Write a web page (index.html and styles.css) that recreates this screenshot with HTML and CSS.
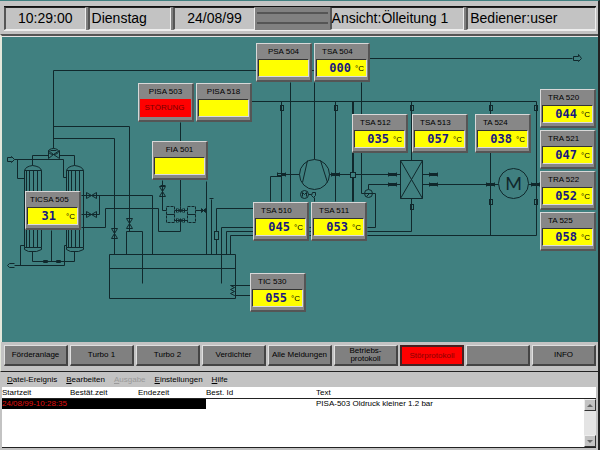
FILE: index.html
```html
<!DOCTYPE html>
<html lang="de">
  <head>
    <meta charset="UTF-8" />
    <meta name="viewport" content="width=device-width, initial-scale=1.0" />
    <title>Ölleitung 1</title>
    <link rel="stylesheet" href="styles.css">
  </head>
  <body>
    <header>
      <div class="field time">10:29:00</div>
      <div class="field day">Dienstag</div>
      <div class="field date">24/08/99</div>
      <div class="grip"></div>
      <div class="field view">Ansicht:Ölleitung 1</div>
      <div class="field user">Bediener:user</div>
    </header>

    <main>
      <div class="plant">
        <svg class="pipes" viewBox="2 37 595 305" width="595" height="305" aria-hidden="true">
          <defs>
            <path id="valve-h" d="M-5,-3 V3 L5,-3 V3 Z" />
            <path id="valve-v" d="M-3,-5 H3 L-3,5 H3 Z" />
            <g id="flange">
              <path d="M-4,-2 V2 M4,-2 V2 M-4,-1 H4 M-4,1 H4" />
            </g>
            <rect id="stub" x="-1" y="-2" width="3" height="5" />
          </defs>
          <g transform="translate(.5 .5)">
            <!-- main lines -->
            <path d="M256,70 H53 V148 M53,126 H129 V231 M53,138 H114 V254" />
            <path d="M126,254 V231 H142 V283" />
            <path d="M311,70 H314 M369,58 H572" />
            <path d="M573,56 H578 V54 L581,58 L578,61 V60 H573 Z" />
            <path d="M251,101 H536 M536,101 V235 M490,101 V235 M367,235 H536" />
            <path d="M281,101 V201 M290,82 V201 M314,82 V159 M335,101 V201" />
            <path d="M352,101 V201 M353,101 V201 M361,82 V193 H364" />
            <path d="M411,101 V160 M411,198 V231 H367" />

            <!-- absorber columns -->
            <ellipse cx="53" cy="151" rx="5" ry="3" />
            <path d="M48,158 V150 L53,154 L59,150 V158 L53,154 Z M50,150 H56" />
            <path d="M48,155 H32 V165 M59,155 H74 V165" />
            <path d="M14,159 H63 V177 H66 M17,159 V178 H24" />
            <path d="M7,157 H11 V156 L14,159 L11,162 V161 H7 Z" />
            <path d="M24,170 Q25,166 32,165 Q40,166 41,170 Z M66,170 Q67,166 74,165 Q82,166 83,170 Z" />
            <path d="M24,170 V247 M26,170 V247 M29,170 V247 M33,170 V247 M37,170 V247 M41,170 V247" />
            <path d="M66,170 V247 M68,170 V247 M71,170 V247 M75,170 V247 M79,170 V247 M83,170 V247" />
            <path d="M24,247 H41 V249 L36,251 H28 L24,249 Z M66,247 H83 V249 L78,251 H70 L66,249 Z" />
            <path d="M32,251 V261 H74 V251 M51,230 V261" />
            <path d="M43,260 H47 V262 H43 Z M56,260 H60 V262 H56 Z" />
            <path d="M14,265 H64 V245 H66 M20,265 V245 H24 M14,263 H9 L7,265 L9,267 H14" />

            <!-- lines to the oil tank -->
            <path d="M81,195 H152 V254 M81,214 H99 V195" />
            <path d="M81,227 H105 V208 H158 V231 H180 V222" />
            <use href="#valve-h" x="91" y="195" />
            <use href="#valve-h" x="91" y="214" />
            <use href="#valve-v" x="129" y="223" />
            <use href="#valve-v" x="114" y="233" />

            <!-- oil pumps -->
            <path d="M180,122 V206 M162,180 V210 H166 M160,185 H165" />
            <use href="#valve-v" x="162" y="191" />
            <path class="dash" d="M166,206 H174 V222 H166 Z M187,206 H195 V222 H187 Z" />
            <path d="M174,210 H187 M174,220 H187 M166,214 H174 M187,214 H195 M180,206 V212 M180,218 V224" />
            <path d="M177,208 L183,212 M183,208 L177,212 M177,218 L183,222 M183,218 L177,222" />
            <path d="M176,208 V212 M184,208 V212 M176,218 V222 M184,218 V222" />
            <path d="M195,210 H205 M201,208 L205,212 V208 L201,212 Z" />

            <!-- tank -->
            <path d="M109,254 H235 V298 H109 Z M109,268 H235" />
            <path d="M206,181 V254 M211,199 V254 M209,198 H213" />
            <path d="M216,254 V208 H253 M221,283 V227 H253 M226,254 V231 H253 M230,254 V235 H253" />
            <rect class="fill" x="214" y="231" width="4" height="8" />
            <path d="M250,285 H230 L234,287 L230,289 L234,291 L230,293 L234,295 H250" />
            <path d="M309,227 H311 M309,231 H311 M309,235 H311" />

            <!-- compressor -->
            <circle class="fill" cx="314" cy="174" r="15" />
            <path d="M307,160 L302,182 M320,160 L327,182" />
            <path d="M299,174 H281 M329,174 H400 M270,201 V176 H281" />
            <use href="#flange" x="281" y="174" />
            <use href="#flange" x="335" y="174" />
            <rect class="fill" x="350" y="172" width="5" height="5" />
            <circle cx="304" cy="194" r="4" />
            <path d="M302,196 V192 L304,194 L306,192 V196 M308,194 H311 M312,192 H315 V195 L313,197 L311,195 Z M314,197 V201" />

            <!-- oil return -->
            <circle cx="368" cy="193" r="4" />
            <path d="M368,189 V184 H400 M364,193 H375 V227 H367 M369,193 L366,196" />

            <!-- cooler -->
            <path class="fill" d="M400,160 H422 V198 H400 Z" />
            <path d="M400,160 L422,198 M422,160 L400,198" />
            <path d="M422,174 H437 M422,184 H498 M528,184 H540" />
            <use href="#flange" x="392" y="174" />
            <use href="#flange" x="392" y="184" />
            <use href="#flange" x="433" y="174" />
            <use href="#flange" x="433" y="184" />
            <use href="#flange" x="490" y="184" />
            <use href="#flange" x="535" y="184" />

            <!-- motor -->
            <circle class="fill" cx="513" cy="183" r="15" />
            <text x="513" y="189" text-anchor="middle">M</text>

            <use href="#stub" x="281" y="107" />
            <use href="#stub" x="335" y="107" />
            <use href="#stub" x="411" y="107" />
            <use href="#stub" x="490" y="107" />
            <use href="#stub" x="535" y="107" />
            <use href="#stub" x="411" y="206" />
            <use href="#stub" x="490" y="201" />
            <use href="#stub" x="535" y="201" />
          </g>
        </svg>

        <div class="tag center psa504"><h2>PSA 504</h2><p></p></div>
        <div class="tag tsa504"><h2>TSA 504</h2><p><b>000</b> <span>°C</span></p></div>
        <div class="tag center alarm pisa503"><h2>PISA 503</h2><p>STÖRUNG</p></div>
        <div class="tag center pisa518"><h2>PISA 518</h2><p></p></div>
        <div class="tag center fia501"><h2>FIA 501</h2><p></p></div>
        <div class="tag tsa512"><h2>TSA 512</h2><p><b>035</b> <span>°C</span></p></div>
        <div class="tag tsa513"><h2>TSA 513</h2><p><b>057</b> <span>°C</span></p></div>
        <div class="tag ta524"><h2>TA 524</h2><p><b>038</b> <span>°C</span></p></div>
        <div class="tag tra520"><h2>TRA 520</h2><p><b>044</b> <span>°C</span></p></div>
        <div class="tag tra521"><h2>TRA 521</h2><p><b>047</b> <span>°C</span></p></div>
        <div class="tag tra522"><h2>TRA 522</h2><p><b>052</b> <span>°C</span></p></div>
        <div class="tag ta525"><h2>TA 525</h2><p><b>058</b> <span>°C</span></p></div>
        <div class="tag wide ticsa505"><h2>TICSA 505</h2><p><b>31</b> <span>°C</span></p></div>
        <div class="tag tsa510"><h2>TSA 510</h2><p><b>045</b> <span>°C</span></p></div>
        <div class="tag tsa511"><h2>TSA 511</h2><p><b>053</b> <span>°C</span></p></div>
        <div class="tag tic530"><h2>TIC 530</h2><p><b>055</b> <span>°C</span></p></div>
      </div>
    </main>

    <nav class="views">
      <button>Förderanlage</button>
      <button>Turbo 1</button>
      <button>Turbo 2</button>
      <button>Verdichter</button>
      <button>Alle Meldungen</button>
      <button>Betriebs-<br>protokoll</button>
      <button class="active">Störprotokoll</button>
      <button aria-label="Frei"></button>
      <button>INFO</button>
    </nav>

    <section class="log">
      <div class="menu">
        <button><u>D</u>atei-Ereignis</button>
        <button><u>B</u>earbeiten</button>
        <button disabled><u>A</u>usgabe</button>
        <button><u>E</u>instellungen</button>
        <button><u>H</u>ilfe</button>
      </div>
      <div class="list">
        <table>
          <thead>
            <tr>
              <th class="col-time">Startzeit</th>
              <th class="col-time">Bestät.zeit</th>
              <th class="col-time">Endezeit</th>
              <th class="col-id">Best. Id</th>
              <th>Text</th>
            </tr>
          </thead>
          <tbody>
            <tr>
              <td class="selected">24/08/99-10:28:35</td>
              <td class="selected"></td>
              <td class="selected"></td>
              <td></td>
              <td>PISA-503 Oldruck kleiner 1.2 bar</td>
            </tr>
          </tbody>
        </table>
        <div class="scroll">
          <button aria-label="Nach oben"><i class="up"></i></button>
          <button aria-label="Nach unten"><i class="down"></i></button>
        </div>
      </div>
    </section>
  </body>
</html>
```
FILE: styles.css
```css
body,
h2,
p,
button {
  margin: 0;
  padding: 0;
  box-sizing: border-box;
}

body {
  font-family: "Liberation Sans", Arial, sans-serif;
  font-size: 8px;
  line-height: 10px;
  background-color: #c3c3c3;
  color: #000;
  display: flex;
  flex-direction: column;
  height: 100vh;
  border-top: 1px solid #408080;
  border-right: 2px solid #222;
  box-sizing: border-box;
  overflow: hidden;
}

button {
  font: inherit;
  color: inherit;
}

/* status bar */
header {
  display: flex;
  gap: 2px;
  margin: 5px 2px 3px 4px;
  background-color: #808080;
  border-top: 1px solid #111;
  border-bottom: 1px solid #eee;
}

.field {
  flex: 80 1 0;
  box-sizing: border-box;
  height: 23px;
  line-height: 20px;
  font-size: 14px;
  white-space: nowrap;
  background-color: #c3c3c3;
  border: 1px solid #222;
  border-left: 2px solid #555;
  border-right-color: #eee;
  border-bottom-color: #eee;
}

.time,
.date {
  text-align: center;
}

.day,
.user {
  padding-left: 2px;
}

.grip {
  flex: 72 1 0;
  height: 8px;
  margin-top: 5px;
  border-top: 2px solid #555;
  border-bottom: 2px solid #555;
}

.view {
  flex-grow: 134;
}

.user {
  flex-grow: 127;
}

/* plant picture */
main {
  flex: 1;
  min-height: 0;
  background-color: #408080;
  border-top: 2px solid #555;
  border-left: 2px solid #e4e8dc;
  box-shadow: inset 0 1px #e4e4e4;
}

.plant {
  position: relative;
  padding-top: 1px;
}

.pipes {
  display: block;
  fill: none;
  stroke: #10282c;
  stroke-width: 1;
}

.pipes .fill {
  fill: #408080;
}

.pipes .dash {
  stroke-dasharray: 3 1;
}

.pipes text {
  fill: #10282c;
  stroke: none;
  font-family: Lato, "Liberation Sans", sans-serif;
  font-size: 18px;
}

.tag {
  position: absolute;
  box-sizing: border-box;
  width: 56px;
  height: 39px;
  background-color: #878787;
  border: 1px solid #d8d8d8;
  border-right: 2px solid #555;
  border-bottom: 2px solid #555;
  padding: 2px 1px 3px;
  display: flex;
  flex-direction: column;
}

.tag h2 {
  font-size: 8px;
  font-weight: normal;
  line-height: 12px;
  padding-left: 6px;
  white-space: nowrap;
}

.tag p {
  flex: 1;
  margin-top: 1px;
  display: flex;
  justify-content: flex-end;
  align-items: center;
  gap: 4px;
  padding-right: 2px;
  background-color: #ff0;
  border: 1px solid #333;
  border-right-color: #ddd;
  border-bottom-color: #ddd;
}

.tag b {
  font-family: "DejaVu Sans Mono", monospace;
  font-size: 12px;
  line-height: 15px;
  color: #181880;
}

.tag span {
  line-height: 14px;
  padding-top: 1px;
  color: #000;
}

.center h2 {
  padding-left: 0;
  text-align: center;
}

.center p {
  justify-content: center;
}

.wide h2 {
  padding-left: 3px;
}

.wide p {
  gap: 10px;
}

.alarm p {
  background-color: #f00;
  border-color: #f00;
  color: #700;
}

.psa504 { left: 254px; top: 7px; }
.tsa504 { left: 312px; top: 7px; }
.pisa503 { left: 136px; top: 47px; }
.pisa518 { left: 194px; top: 47px; }
.fia501 { left: 150px; top: 105px; }
.tsa512 { left: 350px; top: 78px; }
.tsa513 { left: 410px; top: 78px; }
.ta524 { left: 473px; top: 78px; }
.tra520 { left: 538px; top: 53px; }
.tra521 { left: 538px; top: 94px; }
.tra522 { left: 538px; top: 135px; }
.ta525 { left: 538px; top: 176px; }
.ticsa505 { left: 23px; top: 155px; }
.tsa510 { left: 251px; top: 166px; }
.tsa511 { left: 309px; top: 166px; }
.tic530 { left: 248px; top: 237px; }

/* view buttons */
.views {
  display: grid;
  grid-template-columns: repeat(9, 1fr);
  gap: 2px;
  padding: 3px 2px 5px 3px;
  border-left: 1px solid #e4e8dc;
  border-bottom: 1px solid #222;
}

.views button {
  height: 21px;
  line-height: 8px;
  background-color: #808080;
  border: 1px solid #e0e0e0;
  border-right: 2px solid #444;
  border-bottom: 2px solid #444;
  white-space: nowrap;
}

.views .active {
  background-color: #f00;
  color: #800;
  border: 2px solid #422;
}

/* event log */
.menu {
  display: flex;
  gap: 9px;
  height: 15px;
  padding-left: 7px;
}

.menu button {
  background: none;
  border: none;
}

.menu button:disabled {
  color: #999;
}

.list {
  display: flex;
  height: 61px;
  margin: 0 2px 2px;
  box-sizing: border-box;
  background-color: #fff;
  border-bottom: 1px solid #222;
}

table {
  flex: 1;
  align-self: flex-start;
  table-layout: fixed;
  border-collapse: collapse;
  width: 100%;
}

th,
td {
  padding: 0;
  text-align: left;
  font-weight: normal;
  white-space: nowrap;
  overflow: hidden;
}

th {
  height: 11px;
  border-bottom: 1px solid #222;
}

.col-time {
  width: 68px;
}

.col-id {
  width: 110px;
}

.selected {
  background-color: #000;
  color: #e01010;
}

.scroll {
  width: 12px;
  margin-top: 11px;
  border-top: 1px solid #222;
  background-color: #e4e4e4;
  display: flex;
  flex-direction: column;
  justify-content: space-between;
}

.scroll button {
  width: 12px;
  height: 12px;
  display: flex;
  align-items: center;
  justify-content: center;
  background-color: #c3c3c3;
  border: 1px solid #eee;
  border-right-color: #333;
  border-bottom-color: #333;
}

.scroll i {
  border: 3px solid transparent;
}

.scroll .up {
  border-top: none;
  border-bottom-color: #666;
}

.scroll .down {
  border-bottom: none;
  border-top-color: #666;
}
```
